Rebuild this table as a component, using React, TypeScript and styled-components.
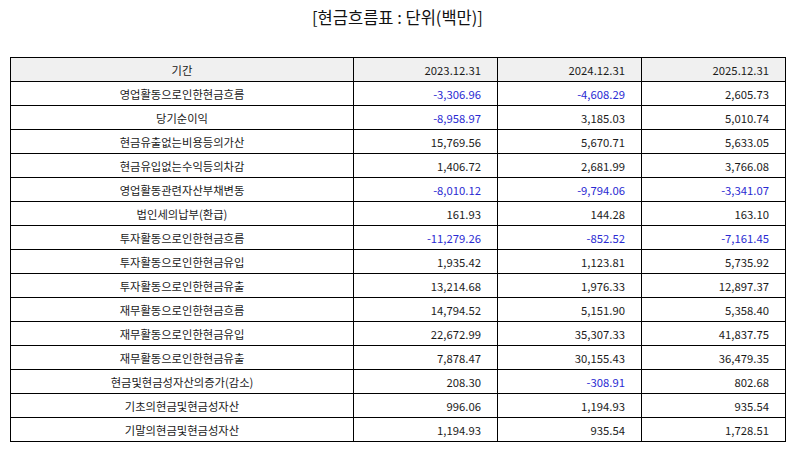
import React from "react";
import styled, { createGlobalStyle } from "styled-components";

const GlobalStyle = createGlobalStyle`
  html, body { margin: 0; padding: 0; background: #ffffff; }
  body { font-family: "Noto Sans CJK KR", "Noto Sans", sans-serif; color: #1a1a1a; }
`;

const Page = styled.div`
  width: 794px;
  height: 452px;
  box-sizing: border-box;
  padding: 0 9px 0 10px;
  display: flex;
  flex-direction: column;
`;

const Title = styled.h1`
  margin: 0;
  height: 57px;
  box-sizing: border-box;
  padding-top: 5px;
  font-size: 16.5px;
  font-weight: 400;
  line-height: 24px;
  text-align: center;
  color: #111;
`;

const Table = styled.table`
  width: 775px;
  border-collapse: collapse;
  table-layout: fixed;
  font-size: 11.3px;
`;

const HeadCell = styled.th<{ $align: "center" | "right" }>`
  height: 23px;
  padding: 0 ${(p) => (p.$align === "right" ? "16px" : "0")} 0 0;
  border: 1px solid #000;
  background: #f0f0f0;
  font-weight: 400;
  text-align: ${(p) => p.$align};
  color: #1a1a1a;
  line-height: 14px;
`;

const LabelCell = styled.td`
  height: 23px;
  padding: 0;
  border: 1px solid #000;
  text-align: center;
  color: #1a1a1a;
  line-height: 14px;
`;

const ValueCell = styled.td<{ $neg: boolean }>`
  height: 23px;
  padding: 0 16px 0 0;
  border: 1px solid #000;
  text-align: right;
  color: ${(p) => (p.$neg ? "#2a2ad2" : "#1a1a1a")};
  line-height: 14px;
`;

const rows: [string, string, string, string][] = [
  ["영업활동으로인한현금흐름", "-3,306.96", "-4,608.29", "2,605.73"],
  ["당기순이익", "-8,958.97", "3,185.03", "5,010.74"],
  ["현금유출없는비용등의가산", "15,769.56", "5,670.71", "5,633.05"],
  ["현금유입없는수익등의차감", "1,406.72", "2,681.99", "3,766.08"],
  ["영업활동관련자산부채변동", "-8,010.12", "-9,794.06", "-3,341.07"],
  ["법인세의납부(환급)", "161.93", "144.28", "163.10"],
  ["투자활동으로인한현금흐름", "-11,279.26", "-852.52", "-7,161.45"],
  ["투자활동으로인한현금유입", "1,935.42", "1,123.81", "5,735.92"],
  ["투자활동으로인한현금유출", "13,214.68", "1,976.33", "12,897.37"],
  ["재무활동으로인한현금흐름", "14,794.52", "5,151.90", "5,358.40"],
  ["재무활동으로인한현금유입", "22,672.99", "35,307.33", "41,837.75"],
  ["재무활동으로인한현금유출", "7,878.47", "30,155.43", "36,479.35"],
  ["현금및현금성자산의증가(감소)", "208.30", "-308.91", "802.68"],
  ["기초의현금및현금성자산", "996.06", "1,194.93", "935.54"],
  ["기말의현금및현금성자산", "1,194.93", "935.54", "1,728.51"],
];

export default function App() {
  return (
    <>
      <GlobalStyle />
      <Page>
        <Title>[현금흐름표 : 단위(백만)]</Title>
        <Table>
          <colgroup>
            <col style={{ width: 343 }} />
            <col style={{ width: 144 }} />
            <col style={{ width: 144 }} />
            <col style={{ width: 144 }} />
          </colgroup>
          <thead>
            <tr>
              <HeadCell $align="center">기간</HeadCell>
              <HeadCell $align="right">2023.12.31</HeadCell>
              <HeadCell $align="right">2024.12.31</HeadCell>
              <HeadCell $align="right">2025.12.31</HeadCell>
            </tr>
          </thead>
          <tbody>
            {rows.map(([label, ...vals]) => (
              <tr key={label}>
                <LabelCell>{label}</LabelCell>
                {vals.map((v, i) => (
                  <ValueCell key={i} $neg={v.startsWith("-")}>
                    {v}
                  </ValueCell>
                ))}
              </tr>
            ))}
          </tbody>
        </Table>
      </Page>
    </>
  );
}
